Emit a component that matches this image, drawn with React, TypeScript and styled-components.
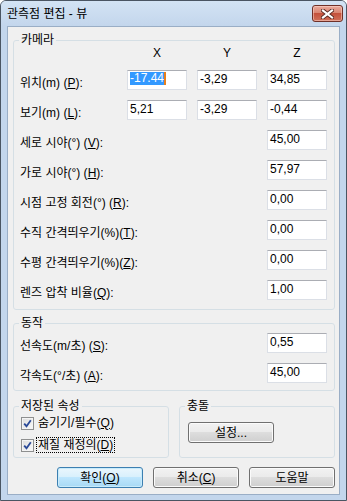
import React from 'react';
import styled, { createGlobalStyle } from 'styled-components';

const GlobalStyle = createGlobalStyle`
  html, body {
    margin: 0;
    padding: 0;
    background: #ffffff;
  }
  body {
    font-family: "Liberation Sans", "Noto Sans CJK KR", sans-serif;
    font-size: 12px;
    color: #000;
  }
`;

const cameraRows = [
  { label: '위치(m) (', key: 'P', tail: '):', values: ['-17.44', '-3,29', '34,85'], selected: true },
  { label: '보기(m) (', key: 'L', tail: '):', values: ['5,21', '-3,29', '-0,44'] },
  { label: '세로 시야(°) (', key: 'V', tail: '):', values: ['45,00'] },
  { label: '가로 시야(°) (', key: 'H', tail: '):', values: ['57,97'] },
  { label: '시점 고정 회전(°) (', key: 'R', tail: '):', values: ['0,00'] },
  { label: '수직 간격띄우기(%)(', key: 'T', tail: '):', values: ['0,00'] },
  { label: '수평 간격띄우기(%)(', key: 'Z', tail: '):', values: ['0,00'] },
  { label: '렌즈 압착 비율(', key: 'Q', tail: '):', values: ['1,00'] },
];

const motionRows = [
  { label: '선속도(m/초) (', key: 'S', tail: '):', value: '0,55' },
  { label: '각속도(°/초) (', key: 'A', tail: '):', value: '45,00' },
];

function App() {
  return (
    <>
      <GlobalStyle />
      <Window>
        <TitleBar>
          <Title>관측점 편집 - 뷰</Title>
          <CloseButton>
            <svg width="13" height="10" viewBox="0 0 13 10">
              <path d="M2 1.5 L11 8.5 M11 1.5 L2 8.5" stroke="#5a2a24" strokeWidth="4" strokeLinecap="square" />
              <path d="M2 1.5 L11 8.5 M11 1.5 L2 8.5" stroke="#ffffff" strokeWidth="2.2" strokeLinecap="square" />
            </svg>
          </CloseButton>
        </TitleBar>

        <Client>
          <Group>
            <Legend>카메라</Legend>
            <CameraGrid>
              <span />
              <AxisHead>X</AxisHead>
              <AxisHead>Y</AxisHead>
              <AxisHead>Z</AxisHead>
              {cameraRows.map((row) => (
                <React.Fragment key={row.key}>
                  <FieldLabel>
                    {row.label}<u>{row.key}</u>{row.tail}
                  </FieldLabel>
                  {row.values.map((v, i) => (
                    <Field key={i} $col={row.values.length === 1 ? 4 : i + 2}>
                      {row.selected && i === 0 ? (
                        <>
                          <Selection>{v}</Selection>
                          <Caret />
                        </>
                      ) : (
                        v
                      )}
                    </Field>
                  ))}
                </React.Fragment>
              ))}
            </CameraGrid>
          </Group>

          <Group $top={6}>
            <Legend>동작</Legend>
            <MotionGrid>
              {motionRows.map((row) => (
                <React.Fragment key={row.key}>
                  <FieldLabel>
                    {row.label}<u>{row.key}</u>{row.tail}
                  </FieldLabel>
                  <Field $col={2}>{row.value}</Field>
                </React.Fragment>
              ))}
            </MotionGrid>
          </Group>

          <BottomRow>
            <Group>
              <Legend>저장된 속성</Legend>
              <CheckList>
                <CheckRow>
                  <CheckBox>
                    <svg width="9" height="9" viewBox="0 0 9 9">
                      <path d="M1.2 4.6 L3.5 7.2 L7.8 1.3" fill="none" stroke="#2b4a98" strokeWidth="1.8" />
                    </svg>
                  </CheckBox>
                  <CheckText>숨기기/필수(<u>Q</u>)</CheckText>
                </CheckRow>
                <CheckRow>
                  <CheckBox>
                    <svg width="9" height="9" viewBox="0 0 9 9">
                      <path d="M1.2 4.6 L3.5 7.2 L7.8 1.3" fill="none" stroke="#2b4a98" strokeWidth="1.8" />
                    </svg>
                  </CheckBox>
                  <CheckText $focused>재질 재정의(<u>D</u>)</CheckText>
                </CheckRow>
              </CheckList>
            </Group>
            <Group>
              <Legend>충돌</Legend>
              <CollisionBody>
                <Button>설정...</Button>
              </CollisionBody>
            </Group>
          </BottomRow>

          <ButtonRow>
            <Button $default>확인(<u>O</u>)</Button>
            <Button>취소(<u>C</u>)</Button>
            <Button>도움말</Button>
          </ButtonRow>
        </Client>
      </Window>
    </>
  );
}

const Window = styled.div`
  width: 347px;
  height: 501px;
  box-sizing: border-box;
  border: 1px solid #4a5562;
  border-radius: 6px 6px 0 0;
  background: #c3d6ec;
  padding: 0 6px 5px;
  display: flex;
  flex-direction: column;
  overflow: hidden;
`;

const TitleBar = styled.div`
  height: 25px;
  margin: 0 -6px;
  padding: 0 3px 0 6px;
  display: flex;
  align-items: flex-start;
  justify-content: space-between;
  background: linear-gradient(#d3e3f4, #c3d6ec);
`;

const Title = styled.div`
  margin-top: 6px;
  line-height: 14px;
  font-size: 12px;
  color: #000;
`;

const CloseButton = styled.div`
  margin-top: 4px;
  width: 31px;
  height: 17px;
  box-sizing: border-box;
  border: 1px solid #6f3028;
  border-radius: 3px;
  background: linear-gradient(#e9aa9e 0%, #d98572 45%, #c4513c 50%, #d0705a 100%);
  box-shadow: inset 0 0 0 1px rgba(255, 220, 210, 0.5);
  display: flex;
  align-items: center;
  justify-content: center;
`;

const Client = styled.div`
  flex: 1;
  background: #f0f0f0;
  border: 1px solid #9aaec6;
  padding: 6px 4px 6px 5px;
  display: flex;
  flex-direction: column;
`;

const Group = styled.fieldset<{ $top?: number }>`
  margin: ${(p) => p.$top ?? 0}px 0 0;
  padding: 0;
  min-width: 0;
  border: 1px solid #d5dfe5;
  border-radius: 3px;
`;

const Legend = styled.legend`
  margin-left: 5px;
  padding: 0 2px;
  line-height: 14px;
`;

const CameraGrid = styled.div`
  display: grid;
  grid-template-columns: minmax(0, 1fr) 60px 60px 60px;
  grid-template-rows: 13px repeat(8, 20px);
  column-gap: 10px;
  row-gap: 10px;
  padding: 0 7px 9px 6px;
`;

const MotionGrid = styled.div`
  display: grid;
  grid-template-columns: minmax(0, 1fr) 60px;
  grid-auto-rows: 20px;
  row-gap: 10px;
  padding: 3px 7px 7px 6px;
`;

const AxisHead = styled.div`
  text-align: center;
  line-height: 13px;
`;

const FieldLabel = styled.div`
  grid-column: 1;
  align-self: end;
  line-height: 14px;
  white-space: nowrap;
`;

const Field = styled.div<{ $col: number }>`
  grid-column: ${(p) => p.$col};
  box-sizing: border-box;
  height: 20px;
  background: #ffffff;
  border: 1px solid #dbdfe6;
  border-top-color: #abadb3;
  padding: 1px 2px 0;
  line-height: 14px;
  white-space: nowrap;
  display: flex;
  align-items: flex-start;
`;

const Selection = styled.span`
  background: #3399ff;
  color: #ffffff;
  line-height: 13px;
`;

const Caret = styled.span`
  width: 2px;
  height: 13px;
  background: #e8801c;
`;

const BottomRow = styled.div`
  margin-top: 8px;
  display: grid;
  grid-template-columns: 1fr 1fr;
  column-gap: 10px;
`;

const CheckList = styled.div`
  display: flex;
  flex-direction: column;
  gap: 6px;
  padding: 2px 6px 4px 7px;
`;

const CheckRow = styled.div`
  height: 16px;
  display: flex;
  align-items: center;
  gap: 3px;
`;

const CheckBox = styled.span`
  width: 13px;
  height: 13px;
  box-sizing: border-box;
  border: 1px solid #8e8f8f;
  background: linear-gradient(135deg, #dcdcdc, #fafafa);
  box-shadow: inset 0 0 0 1px #f4f4f4;
  display: inline-flex;
  align-items: center;
  justify-content: center;
`;

const CheckText = styled.span<{ $focused?: boolean }>`
  line-height: 14px;
  padding: 0 1px;
  outline: ${(p) => (p.$focused ? '1px dotted #000' : 'none')};
`;

const CollisionBody = styled.div`
  padding: 9px 8px 0;
`;

const Button = styled.div<{ $default?: boolean }>`
  width: 86px;
  height: 21px;
  box-sizing: border-box;
  border: 1px solid ${(p) => (p.$default ? '#3c7fb1' : '#707070')};
  border-radius: 3px;
  background: ${(p) =>
    p.$default
      ? 'linear-gradient(#eaf6fd 0%, #d9f0fc 45%, #bee6fd 50%, #a7d9f5 100%)'
      : 'linear-gradient(#f2f2f2 0%, #ebebeb 45%, #dddddd 50%, #cfcfcf 100%)'};
  box-shadow: inset 0 0 0 1px ${(p) => (p.$default ? '#c8ebfb' : '#fbfbfb')};
  display: flex;
  align-items: center;
  justify-content: center;
  line-height: 14px;
`;

const ButtonRow = styled.div`
  margin-top: 9px;
  display: flex;
  justify-content: flex-end;
  gap: 10px;
`;

export default App;
